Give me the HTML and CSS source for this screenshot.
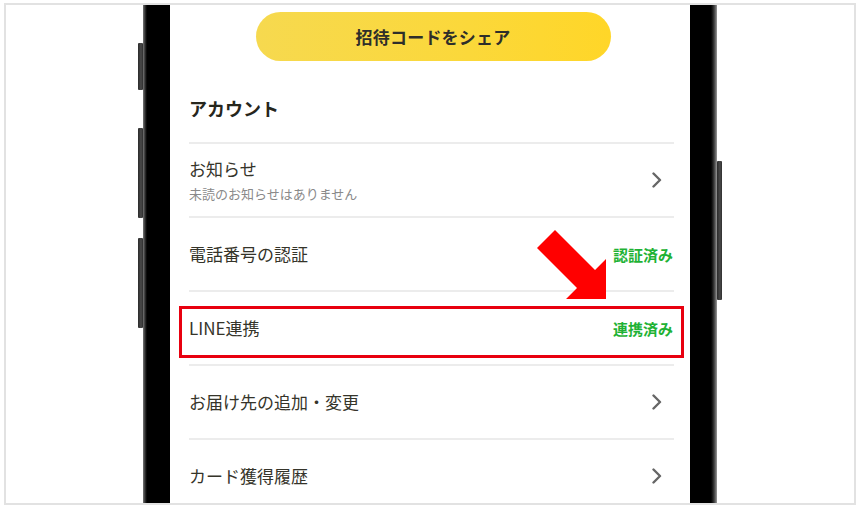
FILE: index.html
```html
<!DOCTYPE html>
<html lang="ja">
<head>
<meta charset="utf-8">
<link rel="stylesheet" href="styles.css">
</head>
<body>
<div class="frame">
  <div class="btn-col left">
    <span class="side-btn b1"></span>
    <span class="side-btn b2"></span>
    <span class="side-btn b3"></span>
  </div>
  <div class="phone">
    <div class="bezel bezel-left"></div>
    <div class="screen">
      <div class="share-btn">招待コードをシェア</div>
      <h2 class="section-title">アカウント</h2>
      <ul class="menu">
        <li class="row">
          <div class="row-text">
            <div class="row-title">お知らせ</div>
            <div class="row-sub">未読のお知らせはありません</div>
          </div>
          <svg class="chev" viewBox="0 0 10 16" width="10" height="16"><path d="M1.5 1.5 L8 8 L1.5 14.5" fill="none" stroke="#666" stroke-width="2.4" stroke-linecap="round" stroke-linejoin="round"/></svg>
        </li>
        <li class="row">
          <div class="row-title">電話番号の認証</div>
          <span class="status">認証済み</span>
        </li>
        <li class="row highlight">
          <div class="row-title">LINE連携</div>
          <span class="status">連携済み</span>
          <span class="red-box"></span>
        </li>
        <li class="row">
          <div class="row-title">お届け先の追加・変更</div>
          <svg class="chev" viewBox="0 0 10 16" width="10" height="16"><path d="M1.5 1.5 L8 8 L1.5 14.5" fill="none" stroke="#666" stroke-width="2.4" stroke-linecap="round" stroke-linejoin="round"/></svg>
        </li>
        <li class="row">
          <div class="row-title">カード獲得履歴</div>
          <svg class="chev" viewBox="0 0 10 16" width="10" height="16"><path d="M1.5 1.5 L8 8 L1.5 14.5" fill="none" stroke="#666" stroke-width="2.4" stroke-linecap="round" stroke-linejoin="round"/></svg>
        </li>
      </ul>
      <svg class="arrow" viewBox="0 0 70 70" width="70" height="70"><polygon points="18,0 58,40 69,29 69,69 29,69 40,58 0,18" fill="#ff0000"/></svg>
    </div>
    <div class="bezel bezel-right"></div>
  </div>
  <div class="btn-col right">
    <span class="side-btn b4"></span>
  </div>
</div>
</body>
</html>
```

FILE: styles.css
```css
html, body {
  margin: 0;
  padding: 0;
  background: #ffffff;
}

body {
  font-family: "Noto Sans CJK JP", "Noto Sans", sans-serif;
  width: 859px;
  height: 507px;
  overflow: hidden;
}

.frame {
  margin: 3px 0 0 4px;
  width: 852px;
  height: 502px;
  box-sizing: border-box;
  border: 2px solid #e2e2e2;
  display: flex;
  justify-content: center;
  overflow: hidden;
}

.btn-col {
  width: 5px;
  display: flex;
  flex-direction: column;
}

.side-btn {
  display: block;
  flex: none;
  width: 5px;
  background: linear-gradient(to right, #2a2a2a, #4a4a4a 60%, #2e2e2e);
  border-radius: 1px;
}

.b1 { margin-top: 38px; height: 47px; }
.b2 { margin-top: 38px; height: 90px; }
.b3 { margin-top: 20px; height: 90px; }
.b4 { margin-top: 156px; height: 139px; }

.phone {
  width: 574px;
  display: flex;
  background: #000;
}

.bezel {
  width: 27px;
  flex: none;
}

.bezel-left {
  background: linear-gradient(to right, #777 0, #333 2px, #000 4px, #000 100%);
}

.bezel-right {
  background: linear-gradient(to right, #000 0, #000 21px, #222 23px, #555 25px, #9a9a9a 27px);
}

.screen {
  position: relative;
  width: 520px;
  flex: none;
  background: #fff;
  box-sizing: border-box;
  padding: 0 16px 0 19px;
  display: flex;
  flex-direction: column;
  overflow: hidden;
}

.screen > * {
  flex-shrink: 0;
}

.share-btn {
  align-self: center;
  margin: 7px 0 0 3px;
  width: 355px;
  height: 49px;
  border-radius: 25px;
  background: linear-gradient(90deg, #f6d94f 0%, #fbd83a 60%, #ffd628 100%);
  display: flex;
  align-items: center;
  justify-content: center;
  font-size: 17px;
  font-weight: 700;
  color: #2e2e2a;
  letter-spacing: 0.2px;
}

.section-title {
  margin: 35px 0 22px;
  font-size: 18px;
  line-height: 24px;
  font-weight: 700;
  color: #26261c;
}

.menu {
  list-style: none;
  margin: 0;
  padding: 0;
}

.row {
  position: relative;
  height: 74px;
  box-sizing: border-box;
  border-top: 2px solid #ececec;
  display: flex;
  align-items: center;
  justify-content: space-between;
}

.row-text {
  display: flex;
  flex-direction: column;
  gap: 5px;
}

.row-title {
  font-size: 17px;
  line-height: 22px;
  color: #35342a;
}

.row-sub {
  font-size: 13px;
  line-height: 18px;
  color: #8a8a8a;
}

.chev {
  margin-right: 12px;
  display: block;
}

.status {
  font-size: 15px;
  font-weight: 700;
  color: #1fb235;
  margin-right: 1px;
}

.red-box {
  position: absolute;
  left: -10px;
  right: -10px;
  top: 14px;
  height: 52px;
  box-sizing: border-box;
  border: 3px solid #e8000f;
}

.arrow {
  position: absolute;
  left: 367px;
  top: 225px;
}
```
